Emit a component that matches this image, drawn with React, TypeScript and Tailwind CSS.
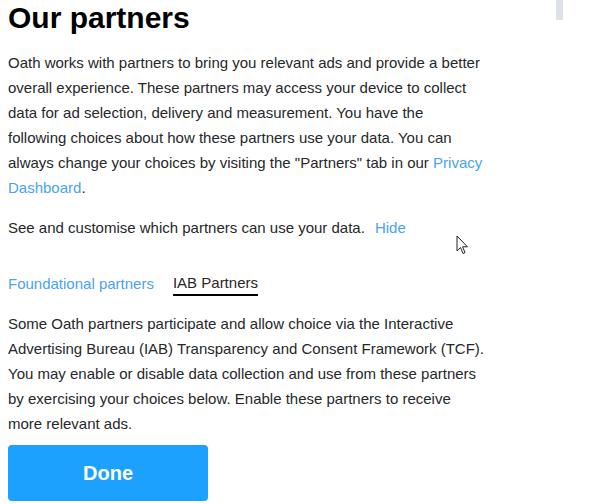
const App = () => {
  return (
    <div
      className="relative w-[590px] h-[504px] overflow-hidden bg-white text-[#26282a]"
      style={{ fontFamily: '"Liberation Sans", Arial, sans-serif' }}
    >
      {/* scrollbar thumb */}
      <div className="absolute left-[556px] top-0 w-[7px] h-[20px] bg-[#dde1ea]" />

      {/* mouse cursor */}
      <svg
        className="absolute left-[456px] top-[235px]"
        width="13"
        height="20"
        viewBox="0 0 13 20"
      >
        <path
          d="M1 1 L1 16 L4.5 12.5 L7 18.5 L9 17.6 L6.6 11.8 L11.5 11.8 Z"
          fill="#fff"
          stroke="#222"
          strokeWidth="1"
          strokeLinejoin="round"
        />
      </svg>

      <div className="px-2 w-[492px]">
        <h1 className="text-[30px] font-bold leading-[36px] text-black">
          Our partners
        </h1>
        <p className="mt-[14px] text-[15px] leading-[25px]">
          Oath works with partners to bring you relevant ads and provide a better
          overall experience. These partners may access your device to collect
          data for ad selection, delivery and measurement. You have the following
          choices about how these partners use your data. You can always change
          your choices by visiting the "Partners" tab in our{" "}
          <a className="text-[#4aa3f0]">Privacy</a>{" "}
          <a className="text-[#4aa3f0]">Dashboard</a>.
        </p>
        <p className="mt-[15px] text-[15px] leading-[25px]">
          See and customise which partners can use your data.
          <a className="ml-[10px] text-[#4aa3f0]">Hide</a>
        </p>

        {/* tabs */}
        <div className="mt-[31px] flex gap-[19px] text-[15px] leading-[25px]">
          <button className="text-[#4aa3f0]">Foundational partners</button>
          <button className="border-b-2 border-black leading-[22px] pt-[1px]">
            IAB Partners
          </button>
        </div>

        <p className="mt-[15px] text-[15px] leading-[25px]">
          Some Oath partners participate and allow choice via the Interactive
          Advertising Bureau (IAB) Transparency and Consent Framework (TCF). You
          may enable or disable data collection and use from these partners by
          exercising your choices below. Enable these partners to receive more
          relevant ads.
        </p>

        <button className="mt-[9px] w-[200px] h-[56px] rounded bg-[#1da1ff] text-white text-[20px] font-bold">
          Done
        </button>
      </div>
    </div>
  );
};

export default App;
